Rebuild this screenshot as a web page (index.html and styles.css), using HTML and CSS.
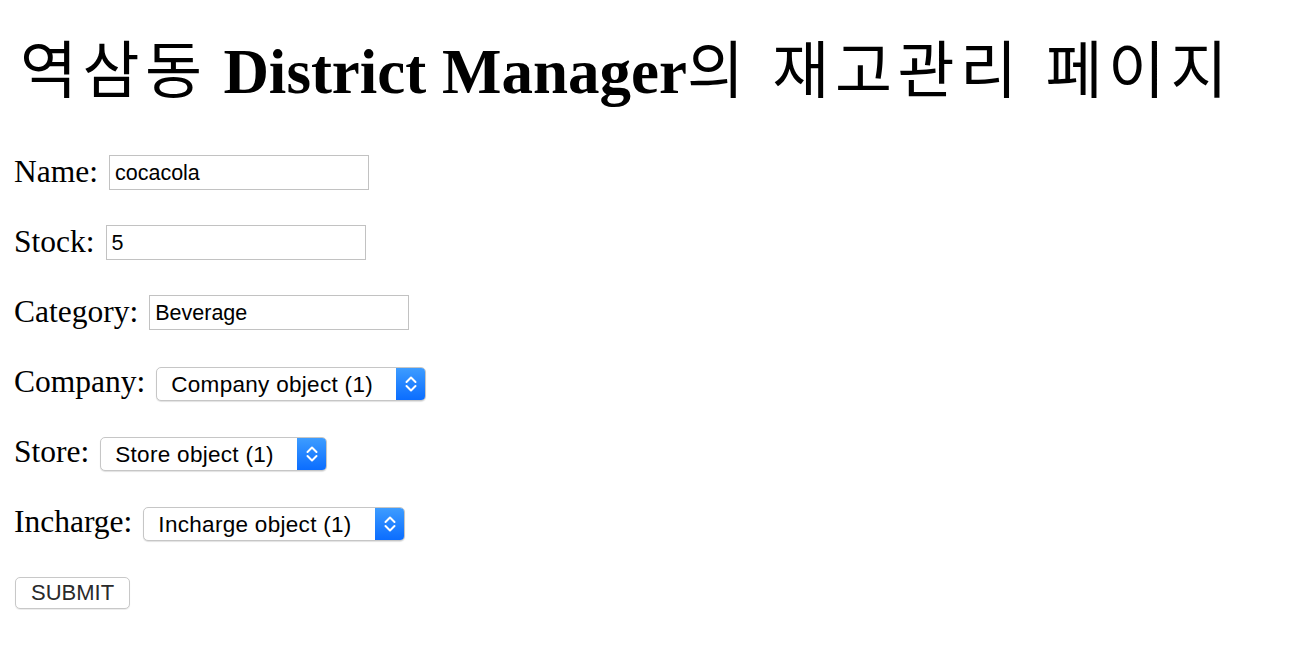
FILE: index.html
```html
<!DOCTYPE html>
<html lang="ko">
<head>
<meta charset="utf-8">
<title>재고관리</title>
<link rel="stylesheet" href="styles.css">
</head>
<body>
<main class="page">
  <h1 class="title"><span class="ko">역삼동</span> District Manager<span class="ko">의 재고관리 페이지</span></h1>
  <form class="form">
    <div class="row">
      <label class="label" for="name">Name:</label>
      <input class="field" id="name" type="text" value="cocacola">
    </div>
    <div class="row">
      <label class="label" for="stock">Stock:</label>
      <input class="field" id="stock" type="text" value="5">
    </div>
    <div class="row">
      <label class="label" for="category">Category:</label>
      <input class="field" id="category" type="text" value="Beverage">
    </div>
    <div class="row">
      <label class="label" for="company">Company:</label>
      <span class="select">
        <select id="company" class="select-input"><option>Company object (1)</option></select>
        <span class="select-arrow"><svg width="14" height="22" viewBox="0 0 14 22"><path d="M2.5 9 L7 4.5 L11.5 9 M2.5 13 L7 17.5 L11.5 13" fill="none" stroke="#fff" stroke-width="2" stroke-linecap="round" stroke-linejoin="round"/></svg></span>
      </span>
    </div>
    <div class="row">
      <label class="label" for="store">Store:</label>
      <span class="select">
        <select id="store" class="select-input"><option>Store object (1)</option></select>
        <span class="select-arrow"><svg width="14" height="22" viewBox="0 0 14 22"><path d="M2.5 9 L7 4.5 L11.5 9 M2.5 13 L7 17.5 L11.5 13" fill="none" stroke="#fff" stroke-width="2" stroke-linecap="round" stroke-linejoin="round"/></svg></span>
      </span>
    </div>
    <div class="row">
      <label class="label" for="incharge">Incharge:</label>
      <span class="select">
        <select id="incharge" class="select-input"><option>Incharge object (1)</option></select>
        <span class="select-arrow"><svg width="14" height="22" viewBox="0 0 14 22"><path d="M2.5 9 L7 4.5 L11.5 9 M2.5 13 L7 17.5 L11.5 13" fill="none" stroke="#fff" stroke-width="2" stroke-linecap="round" stroke-linejoin="round"/></svg></span>
      </span>
    </div>
    <div class="row">
      <button class="submit" type="button">SUBMIT</button>
    </div>
  </form>
</main>
</body>
</html>
```
FILE: styles.css
```css
html, body {
  margin: 0;
  padding: 0;
  background: #fff;
}

.page {
  padding: 0 0 0 14px;
  font-family: "Liberation Serif", "Noto Sans CJK KR", serif;
  color: #000;
}

.title {
  margin: 0;
  padding-top: 30px;
  font-size: 63px;
  line-height: 72px;
  height: 72px;
  font-weight: 700;
  white-space: nowrap;
  padding-left: 6px;
}

.ko {
  font-family: "Noto Sans CJK KR", sans-serif;
  font-weight: 400;
  font-size: 62px;
  letter-spacing: 5.5px;
}

.form {
  display: flex;
  flex-direction: column;
  gap: 35px;
  margin-top: 53px;
}

.row {
  display: flex;
  align-items: center;
  height: 35px;
}

.label {
  font-size: 31.5px;
  line-height: 1.15;
  margin-right: 11px;
}

.field {
  box-sizing: border-box;
  width: 260px;
  height: 35px;
  margin: 0;
  padding: 2px 5px 0;
  border: 1px solid #c2c2c2;
  border-radius: 0;
  font-family: "Liberation Sans", Arial, sans-serif;
  font-size: 21.5px;
  color: #000;
  background: #fff;
  outline: none;
}

.select {
  display: inline-flex;
  align-items: stretch;
  height: 34px;
  margin-top: 3px;
  border: 1px solid #c6c6c6;
  border-radius: 5px;
  box-shadow: 0 1px 1px rgba(0, 0, 0, 0.12);
  background: #fff;
  box-sizing: border-box;
  overflow: hidden;
}

.select-input {
  appearance: none;
  -webkit-appearance: none;
  border: none;
  background: transparent;
  margin: 0;
  padding: 0 23px 0 14px;
  font-family: "Liberation Sans", Arial, sans-serif;
  font-size: 22.5px;
  letter-spacing: 0.3px;
  color: #000;
  outline: none;
}

.select-arrow {
  width: 29px;
  display: flex;
  align-items: center;
  justify-content: center;
  background: linear-gradient(#3d9cff, #0b6dff);
}

.submit {
  box-sizing: border-box;
  height: 32px;
  margin: 0 0 0 1px;
  padding: 0 15px;
  border: 1px solid #c8c8c8;
  border-radius: 5px;
  background: #fff;
  box-shadow: 0 1px 1px rgba(0, 0, 0, 0.08);
  font-family: "Liberation Sans", Arial, sans-serif;
  font-size: 22px;
  color: #2a2a2a;
}
```
